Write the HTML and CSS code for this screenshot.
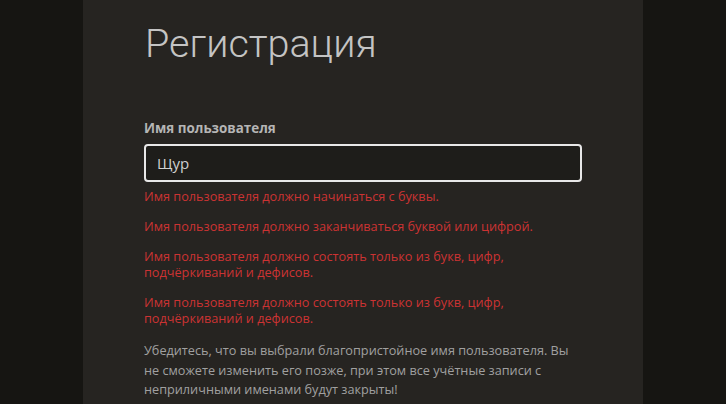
FILE: index.html
```html
<!DOCTYPE html>
<html lang="ru">
<head>
<meta charset="utf-8">
<title>Регистрация</title>
<link rel="stylesheet" href="styles.css">
</head>
<body>
<div class="page">
  <main class="panel">
    <h1 class="title">Регистрация</h1>
    <form class="form">
      <label class="label" for="username">Имя пользователя</label>
      <input class="input" id="username" type="text" value="Щур">
      <div class="errors">
        <p class="error">Имя пользователя должно начинаться с буквы.</p>
        <p class="error">Имя пользователя должно заканчиваться буквой или цифрой.</p>
        <p class="error">Имя пользователя должно состоять только из букв, цифр, подчёркиваний и дефисов.</p>
        <p class="error">Имя пользователя должно состоять только из букв, цифр, подчёркиваний и дефисов.</p>
      </div>
      <p class="help">Убедитесь, что вы выбрали благопристойное имя пользователя. Вы не сможете изменить его позже, при этом все учётные записи с неприличными именами будут закрыты!</p>
    </form>
  </main>
</div>
</body>
</html>
```
FILE: styles.css
```css
html, body {
  margin: 0;
  padding: 0;
  background: #161512;
  height: 100%;
  overflow: hidden;
}
.page {
  display: flex;
  height: 404px;
}
.panel {
  margin-left: 83px;
  width: 560px;
  box-sizing: border-box;
  padding: 24px 61px 0;
  background: #262421;
  font-family: "Open Sans", "Noto Sans", sans-serif;
}
.title {
  margin: 0;
  font-family: Roboto, sans-serif;
  font-weight: 300;
  font-size: 39.5px;
  line-height: 40px;
  color: #c4c4c4;
  padding-left: 1px;
}
.form {
  display: flex;
  flex-direction: column;
  margin-top: 56px;
}
.label {
  font-weight: 700;
  font-size: 13.4px;
  line-height: 16px;
  color: #b5b5b5;
}
.input {
  margin-top: 8px;
  height: 38px;
  box-sizing: border-box;
  border: 2px solid #e8e8e8;
  border-radius: 4px;
  background: #1e1d1a;
  color: #cfcfcf;
  font-family: "Open Sans", "Noto Sans", sans-serif;
  font-size: 15px;
  padding: 0 11px;
  outline: none;
}
.errors {
  display: flex;
  flex-direction: column;
  gap: 14px;
  margin-top: 6px;
}
.error {
  margin: 0;
  font-size: 12.7px;
  line-height: 16px;
  color: #cc3333;
}
.help {
  margin: 15px 0 0;
  font-size: 12.7px;
  line-height: 19.5px;
  color: #a0a0a0;
}
```
